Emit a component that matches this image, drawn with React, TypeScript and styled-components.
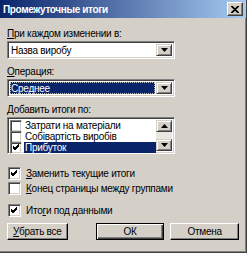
import React from 'react'
import styled, { createGlobalStyle } from 'styled-components'

const GlobalStyle = createGlobalStyle`
    html, body {
        margin: 0;
        padding: 0;
        background: #d4d0c8;
    }
`

const Window = styled.div`
    width: 247px;
    height: 253px;
    box-sizing: border-box;
    background: #d4d0c8;
    font-family: 'Liberation Sans', Arial, sans-serif;
    font-size: 10px;
    letter-spacing: -0.25px;
    color: #000000;
    display: flex;
    flex-direction: column;
    border-right: 1px solid #404040;
    border-bottom: 1px solid #404040;
    box-shadow: inset -1px -1px 0 #808080;
    overflow: hidden;
`

const TitleBar = styled.div`
    height: 18px;
    flex: none;
    display: flex;
    align-items: center;
    justify-content: space-between;
    padding: 0 3px 0 3px;
    background: linear-gradient(to right, #0a246a, #a6caf0);
`

const Title = styled.span`
    color: #ffffff;
    font-weight: 700;
    font-size: 10px;
    letter-spacing: -0.35px;
`

const CloseButton = styled.div`
    width: 16px;
    height: 14px;
    box-sizing: border-box;
    background: #d4d0c8;
    border-top: 1px solid #ffffff;
    border-left: 1px solid #ffffff;
    border-right: 1px solid #404040;
    border-bottom: 1px solid #404040;
    box-shadow: inset -1px -1px 0 #808080;
    display: flex;
    align-items: center;
    justify-content: center;
`

const Body = styled.div`
    display: flex;
    flex-direction: column;
    padding: 9px 7px 0 7px;
`

const Label = styled.div<{ $top?: number }>`
    height: 13px;
    line-height: 13px;
    margin-top: ${(p) => p.$top ?? 0}px;
    margin-bottom: 1px;
    white-space: nowrap;
`

const Sunken = styled.div`
    box-sizing: border-box;
    border-top: 1px solid #808080;
    border-left: 1px solid #808080;
    border-right: 1px solid #ffffff;
    border-bottom: 1px solid #ffffff;
    box-shadow: inset 1px 1px 0 #404040, inset -1px -1px 0 #d4d0c8;
    background: #ffffff;
`

const Combo = styled(Sunken)`
    width: 168px;
    height: 18px;
    display: flex;
    align-items: stretch;
    padding: 2px;
`

const ComboValue = styled.div<{ $selected?: boolean }>`
    flex: 1;
    display: flex;
    align-items: center;
    padding-left: 1px;
    margin-right: 1px;
    background: ${(p) => (p.$selected ? '#0a246a' : 'transparent')};
    color: ${(p) => (p.$selected ? '#ffffff' : '#000000')};
    outline: ${(p) => (p.$selected ? '1px dotted #c0c0c0' : 'none')};
    outline-offset: -1px;
`

const ArrowButton = styled.div`
    width: 16px;
    flex: none;
    box-sizing: border-box;
    background: #d4d0c8;
    border-top: 1px solid #d4d0c8;
    border-left: 1px solid #d4d0c8;
    border-right: 1px solid #404040;
    border-bottom: 1px solid #404040;
    box-shadow: inset 1px 1px 0 #ffffff, inset -1px -1px 0 #808080;
    display: flex;
    align-items: center;
    justify-content: center;
`

const ListBox = styled(Sunken)`
    width: 168px;
    height: 37px;
    display: flex;
    padding: 2px;
`

const ListItems = styled.div`
    flex: 1;
    display: flex;
    flex-direction: column;
`

const ListRow = styled.div`
    height: 11px;
    display: flex;
    align-items: center;
    gap: 2px;
`

const RowText = styled.span<{ $selected?: boolean }>`
    flex: 1;
    height: 11px;
    line-height: 11px;
    padding-left: 1px;
    white-space: nowrap;
    background: ${(p) => (p.$selected ? '#0a246a' : 'transparent')};
    color: ${(p) => (p.$selected ? '#ffffff' : '#000000')};
`

const Scrollbar = styled.div`
    width: 16px;
    flex: none;
    display: flex;
    flex-direction: column;
    justify-content: space-between;
    background: #e8e6e1;
`

const ScrollButton = styled(ArrowButton)`
    width: 16px;
    height: 12px;
`

const CheckBox = styled(Sunken)<{ $size?: number }>`
    width: ${(p) => p.$size ?? 13}px;
    height: ${(p) => p.$size ?? 13}px;
    flex: none;
    display: flex;
    align-items: center;
    justify-content: center;
`

const Options = styled.div`
    display: flex;
    flex-direction: column;
    margin-top: 13px;
    gap: 2px;
`

const Option = styled.div<{ $top?: number }>`
    display: flex;
    align-items: center;
    gap: 5px;
    height: 13px;
    margin-top: ${(p) => p.$top ?? 0}px;
    padding-left: 1px;
    white-space: nowrap;
`

const ButtonRow = styled.div`
    display: flex;
    margin-top: 6px;
`

const Button = styled.div<{ $default?: boolean; $width: number; $left: number }>`
    width: ${(p) => p.$width}px;
    height: 17px;
    margin-left: ${(p) => p.$left}px;
    box-sizing: border-box;
    display: flex;
    align-items: center;
    justify-content: center;
    background: #d4d0c8;
    border: 1px solid ${(p) => (p.$default ? '#000000' : '#ffffff')};
    border-right-color: #000000;
    border-bottom-color: #000000;
    box-shadow: ${(p) =>
        p.$default
            ? 'inset 1px 1px 0 #ffffff, inset -1px -1px 0 #404040, inset -2px -2px 0 #808080'
            : 'inset -1px -1px 0 #808080'};
`

const U = styled.span`
    text-decoration: underline;
`

const Tick = () => (
    <svg width="7" height="7" viewBox="0 0 7 7">
        <path d="M0 2 L2 4 L6 0 M0 3 L2 5 L6 1 M0 4 L2 6 L6 2" stroke="#000" strokeWidth="1" fill="none" shapeRendering="crispEdges" />
    </svg>
)

const Down = () => (
    <svg width="7" height="4" viewBox="0 0 7 4">
        <path d="M0 0 H7 L3.5 4 Z" fill="#000" />
    </svg>
)

const Up = () => (
    <svg width="7" height="4" viewBox="0 0 7 4">
        <path d="M0 4 H7 L3.5 0 Z" fill="#000" />
    </svg>
)

const listItems = [
    { label: 'Затрати на матеріали', checked: false },
    { label: 'Собівартість виробів', checked: false },
    { label: 'Прибуток', checked: true },
]

const App = () => (
    <>
        <GlobalStyle />
        <Window>
            <TitleBar>
                <Title>Промежуточные итоги</Title>
                <CloseButton>
                    <svg width="8" height="7" viewBox="0 0 8 7">
                        <path d="M0 0 L7 7 M1 0 L8 7 M7 0 L0 7 M8 0 L1 7" stroke="#000" strokeWidth="1.1" />
                    </svg>
                </CloseButton>
            </TitleBar>
            <Body>
                <Label>
                    <U>П</U>ри каждом изменении в:
                </Label>
                <Combo>
                    <ComboValue>Назва виробу</ComboValue>
                    <ArrowButton>
                        <Down />
                    </ArrowButton>
                </Combo>
                <Label $top={6}>
                    <U>О</U>перация:
                </Label>
                <Combo>
                    <ComboValue $selected>Среднее</ComboValue>
                    <ArrowButton>
                        <Down />
                    </ArrowButton>
                </Combo>
                <Label $top={6}>
                    <U>Д</U>обавить итоги по:
                </Label>
                <ListBox>
                    <ListItems>
                        {listItems.map((item, i) => (
                            <ListRow key={i}>
                                <CheckBox $size={12}>{item.checked && <Tick />}</CheckBox>
                                <RowText $selected={i === 2}>{item.label}</RowText>
                            </ListRow>
                        ))}
                    </ListItems>
                    <Scrollbar>
                        <ScrollButton>
                            <Up />
                        </ScrollButton>
                        <ScrollButton>
                            <Down />
                        </ScrollButton>
                    </Scrollbar>
                </ListBox>
                <Options>
                    <Option>
                        <CheckBox>
                            <Tick />
                        </CheckBox>
                        <span>
                            <U>З</U>аменить текущие итоги
                        </span>
                    </Option>
                    <Option>
                        <CheckBox />
                        <span>
                            <U>К</U>онец страницы между группами
                        </span>
                    </Option>
                    <Option $top={7}>
                        <CheckBox>
                            <Tick />
                        </CheckBox>
                        <span>
                            Ито<U>г</U>и под данными
                        </span>
                    </Option>
                </Options>
                <ButtonRow>
                    <Button $width={61} $left={0}>
                        <span>
                            <U>У</U>брать все
                        </span>
                    </Button>
                    <Button $default $width={69} $left={28}>
                        ОК
                    </Button>
                    <Button $width={69} $left={6}>
                        Отмена
                    </Button>
                </ButtonRow>
            </Body>
        </Window>
    </>
)

export default App
